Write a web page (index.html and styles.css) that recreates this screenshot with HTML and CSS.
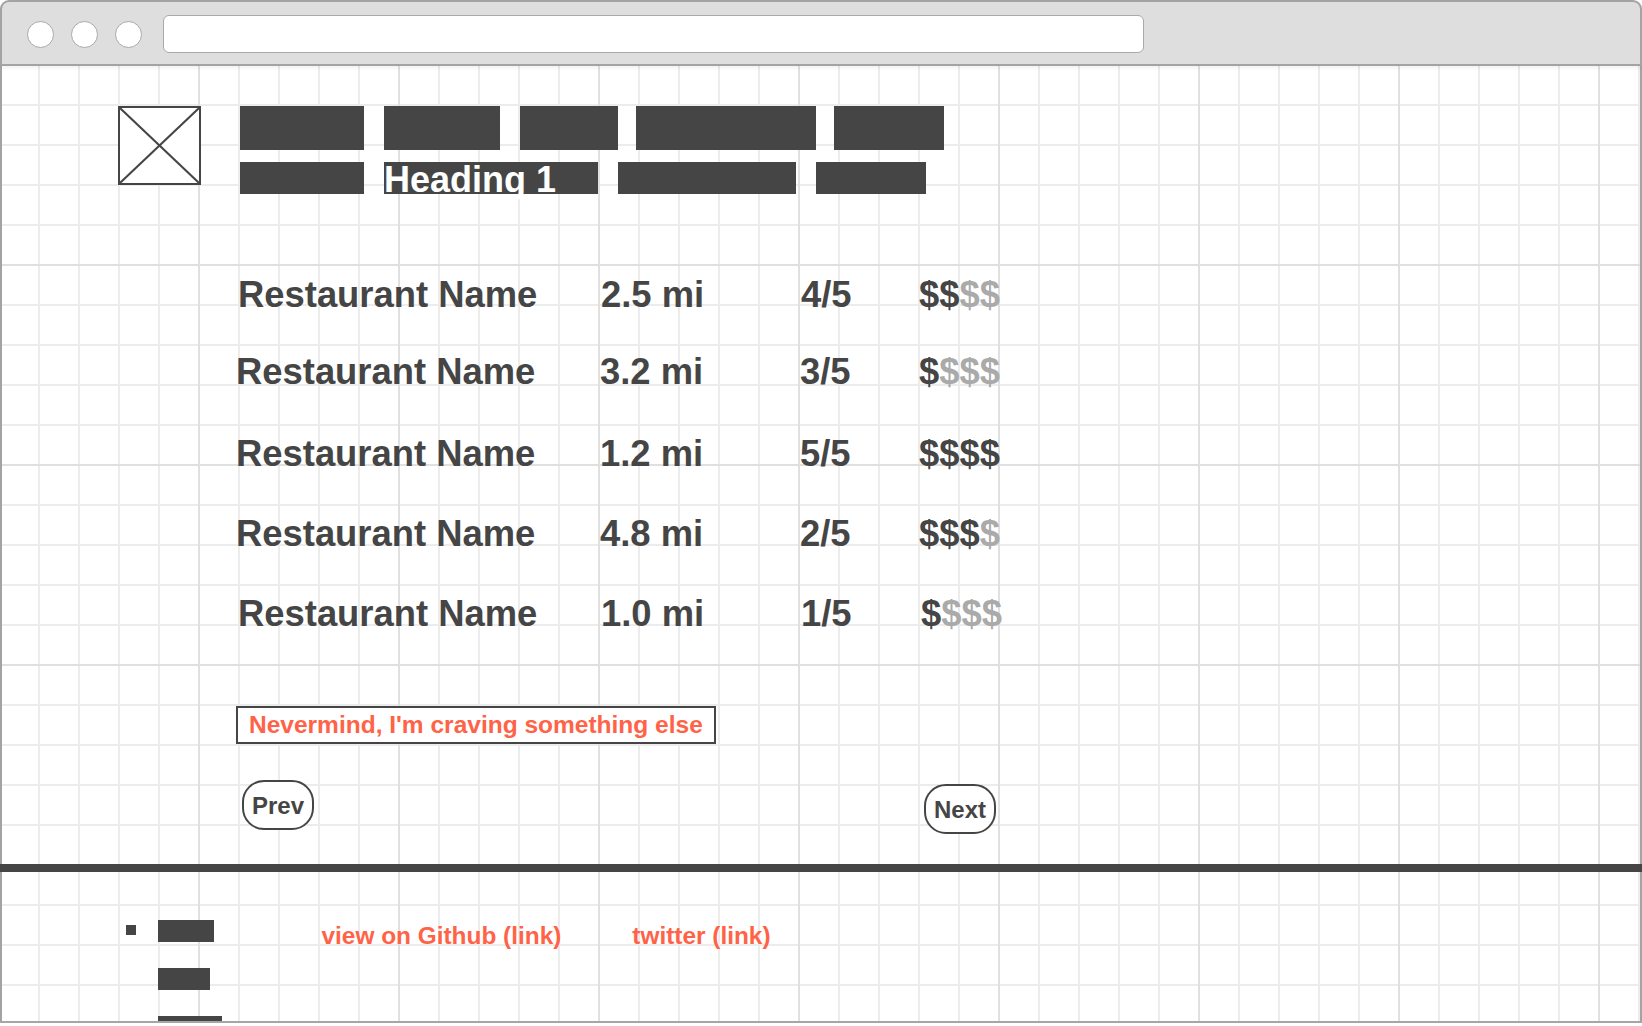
FILE: index.html
```html
<!DOCTYPE html>
<html lang="en">
<head>
<meta charset="utf-8">
<title>Restaurant results wireframe</title>
<link rel="stylesheet" href="styles.css">
</head>
<body>
<div class="window">
  <div class="toolbar">
    <span class="dot"></span>
    <span class="dot"></span>
    <span class="dot"></span>
    <div class="address"></div>
  </div>
  <div class="canvas">
    <header class="site-header">
      <div class="logo">
        <svg class="logo-x" viewBox="0 0 79 75" preserveAspectRatio="none">
          <line x1="0" y1="0" x2="79" y2="75"/>
          <line x1="79" y1="0" x2="0" y2="75"/>
        </svg>
      </div>
      <nav class="nav">
        <div class="nav-row nav-row-top">
          <span class="blk w124"></span>
          <span class="blk w116"></span>
          <span class="blk w98"></span>
          <span class="blk w180 tight"></span>
          <span class="blk w110 tight"></span>
        </div>
        <div class="nav-row nav-row-bottom">
          <span class="blk w124"></span>
          <span class="blk w214 heading"><span class="heading-text">Heading 1</span></span>
          <span class="blk w178"></span>
          <span class="blk w110"></span>
        </div>
      </nav>
    </header>

    <main class="content">
      <ul class="results">
        <li class="row row-first shift">
          <span class="name">Restaurant Name</span>
          <span class="dist">2.5 mi</span>
          <span class="rating">4/5</span>
          <span class="price">$$<span class="off">$$</span></span>
        </li>
        <li class="row row-second">
          <span class="name">Restaurant Name</span>
          <span class="dist">3.2 mi</span>
          <span class="rating">3/5</span>
          <span class="price">$<span class="off">$$$</span></span>
        </li>
        <li class="row">
          <span class="name">Restaurant Name</span>
          <span class="dist">1.2 mi</span>
          <span class="rating">5/5</span>
          <span class="price">$$$$</span>
        </li>
        <li class="row">
          <span class="name">Restaurant Name</span>
          <span class="dist">4.8 mi</span>
          <span class="rating">2/5</span>
          <span class="price">$$$<span class="off">$</span></span>
        </li>
        <li class="row shift row-last">
          <span class="name">Restaurant Name</span>
          <span class="dist">1.0 mi</span>
          <span class="rating">1/5</span>
          <span class="price">$<span class="off">$$$</span></span>
        </li>
      </ul>

      <a class="nevermind" href="#">Nevermind, I'm craving something else</a>

      <div class="pager">
        <button class="pill">Prev</button>
        <button class="pill pill-next">Next</button>
      </div>
    </main>

    <div class="divider"></div>

    <footer class="footer">
      <ul class="foot-list">
        <li class="foot-item"><span class="bullet"></span><span class="fbar fb1"></span></li>
        <li class="foot-item"><span class="fbar fb2"></span></li>
        <li class="foot-item"><span class="fbar fb3"></span></li>
      </ul>
      <div class="links">
        <a class="link" href="#">view on Github (link)</a>
        <a class="link" href="#">twitter (link)</a>
      </div>
    </footer>
  </div>
</div>
</body>
</html>
```

FILE: styles.css
```css
* { box-sizing: border-box; }

html, body {
  margin: 0;
  padding: 0;
  background: #ffffff;
}

body {
  font-family: "Liberation Sans", Arial, Helvetica, sans-serif;
  color: #454545;
}

.window {
  width: 1642px;
  height: 1023px;
  display: flex;
  flex-direction: column;
  border-bottom: 2px solid #a6a6a6;
}

/* ---------- browser chrome ---------- */
.toolbar {
  position: relative;
  z-index: 1;
  flex: none;
  height: 66px;
  padding: 2px 0 0 24.5px;
  background: #dedede;
  border: 2px solid #a3a3a3;
  border-radius: 9px 9px 0 0;
  display: flex;
  align-items: center;
  box-shadow: 0 2px 4px rgba(0, 0, 0, 0.06);
}

.dot {
  width: 27px;
  height: 27px;
  border-radius: 50%;
  background: #ffffff;
  border: 1.5px solid #a9a9a9;
  margin-right: 17px;
  flex: none;
}

.address {
  width: 981px;
  height: 38px;
  margin-left: 4.5px;
  background: #ffffff;
  border: 1.5px solid #a9a9a9;
  border-radius: 6px;
}

/* ---------- canvas with grid ---------- */
.canvas {
  flex: 1;
  overflow: hidden;
  background-color: #ffffff;
  background-image:
    linear-gradient(to right, transparent 198px, #e0e0e0 198px, #e0e0e0 200px, transparent 200px),
    linear-gradient(to bottom, transparent 198px, #e0e0e0 198px, #e0e0e0 200px, transparent 200px),
    linear-gradient(to right, transparent 38px, #ececec 38px, #ececec 40px, transparent 40px),
    linear-gradient(to bottom, transparent 38px, #ececec 38px, #ececec 40px, transparent 40px);
  background-size: 200px 100%, 100% 200px, 40px 100%, 100% 40px;
  box-shadow: inset 2px 0 0 #a3a3a3, inset -2px 0 0 #a3a3a3;
}

/* ---------- header ---------- */
.site-header {
  display: flex;
  align-items: flex-start;
  padding: 40px 0 0 118px;
}

.logo {
  width: 83px;
  height: 79px;
  border: 2px solid #454545;
  background: #ffffff;
  flex: none;
}

.logo-x {
  display: block;
  width: 100%;
  height: 100%;
}

.logo-x line {
  stroke: #454545;
  stroke-width: 2;
  vector-effect: non-scaling-stroke;
}

.nav {
  margin-left: 39px;
  display: flex;
  flex-direction: column;
  gap: 12px;
}

.nav-row {
  display: flex;
  gap: 20px;
}

.nav-row-top .blk { height: 44px; }
.nav-row-bottom .blk { height: 32px; }

.blk {
  display: block;
  background: #454545;
  flex: none;
}

.blk.tight { margin-left: -2px; }

.w98 { width: 98px; }
.w110 { width: 110px; }
.w116 { width: 116px; }
.w124 { width: 124px; }
.w178 { width: 178px; }
.w180 { width: 180px; }
.w214 { width: 214px; }

.heading-text {
  display: block;
  font-size: 36px;
  line-height: 36px;
  font-weight: 700;
  color: #ffffff;
  white-space: nowrap;
}

/* ---------- results ---------- */
.content {
  display: flex;
  flex-direction: column;
  align-items: flex-start;
}

.results {
  list-style: none;
  margin: 61px 0 0 0;
  padding: 0 0 0 236px;
}

.row {
  display: grid;
  grid-template-columns: 364px 200px 119px auto;
  height: 80px;
  line-height: 80px;
  font-size: 36.4px;
  font-weight: 700;
  color: #454545;
  white-space: nowrap;
}

.row-first { height: 77px; }
.row-second { height: 82px; }

.row.shift .name { padding-left: 2px; }
.row.shift .dist,
.row.shift .rating { padding-left: 1px; }
.row-last .price { padding-left: 2px; }

.off { color: #aaaaaa; }

.nevermind {
  display: block;
  margin: 52px 0 0 236px;
  padding: 0 11px;
  border: 2px solid #454545;
  background: #ffffff;
  font-size: 24.5px;
  line-height: 34px;
  font-weight: 700;
  color: #ff6347;
  text-decoration: none;
  white-space: nowrap;
}

.pager {
  width: 754px;
  margin: 36px 0 0 242px;
  display: flex;
  justify-content: space-between;
  align-items: flex-start;
}

.pill {
  height: 50px;
  padding: 1px 8px 0;
  border: 2px solid #454545;
  border-radius: 22px;
  background: #ffffff;
  font-family: inherit;
  font-size: 24px;
  line-height: 45px;
  font-weight: 700;
  color: #454545;
}

.pill-next { margin-top: 4px; }

/* ---------- divider + footer ---------- */
.divider {
  height: 8px;
  margin-top: 30px;
  background: #454545;
}

.footer {
  display: flex;
  align-items: flex-start;
  padding: 48px 0 0 126px;
}

.foot-list {
  list-style: none;
  margin: 0;
  padding: 0;
  display: flex;
  flex-direction: column;
  gap: 26px;
}

.foot-item {
  display: flex;
  align-items: center;
  padding-left: 32px;
}

.foot-item:first-child { padding-left: 0; }

.bullet {
  width: 10px;
  height: 10px;
  margin: -2px 22px 0 0;
  background: #454545;
}

.fbar {
  height: 22px;
  background: #454545;
}

.fb1 { width: 56px; }
.fb2 { width: 52px; }
.fb3 { width: 64px; }

.links {
  display: flex;
  gap: 71px;
  margin-left: 99.5px;
  padding-top: 2px;
}

.link {
  font-size: 24.4px;
  line-height: 28px;
  font-weight: 700;
  color: #ff6347;
  text-decoration: none;
  white-space: nowrap;
}
```
